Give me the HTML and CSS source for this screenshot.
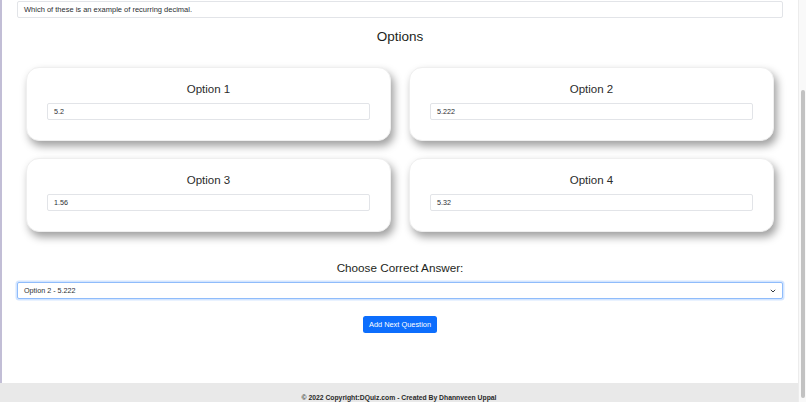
FILE: index.html
```html
<!DOCTYPE html>
<html lang="en">
<head>
<meta charset="utf-8">
<title>DQuiz - Add Question</title>
<link rel="stylesheet" href="styles.css">
</head>
<body>
<div class="page">
  <div class="main">
    <div class="content">
      <div class="field question">Which of these is an example of recurring decimal.</div>
      <h2 class="heading options-heading">Options</h2>
      <div class="cards">
        <div class="card">
          <h3 class="card-title">Option 1</h3>
          <div class="field">5.2</div>
        </div>
        <div class="card">
          <h3 class="card-title">Option 2</h3>
          <div class="field">5.222</div>
        </div>
        <div class="card">
          <h3 class="card-title">Option 3</h3>
          <div class="field">1.56</div>
        </div>
        <div class="card">
          <h3 class="card-title">Option 4</h3>
          <div class="field">5.32</div>
        </div>
      </div>
      <h2 class="heading answer-heading">Choose Correct Answer:</h2>
      <div class="field select">
        <span>Option 2 - 5.222</span>
        <svg class="chev" width="6" height="4" viewBox="0 0 6 4"><path d="M0.8 0.8 L3 3 L5.2 0.8" fill="none" stroke="#343a40" stroke-width="1"/></svg>
      </div>
      <div class="actions">
        <button class="btn">Add Next Question</button>
      </div>
    </div>
    <footer class="footer">© 2022 Copyright:DQuiz.com - Created By Dhannveen Uppal</footer>
  </div>
  <div class="scrollbar"><div class="thumb"></div></div>
</div>
</body>
</html>
```
FILE: styles.css
```css
* { box-sizing: border-box; }
html, body { margin: 0; padding: 0; }
body {
  font-family: "Liberation Sans", Arial, sans-serif;
  color: #212529;
  background: #fff;
}
.page {
  display: flex;
  width: 806px;
  height: 402px;
  overflow: hidden;
}
.main {
  flex: 1;
  display: flex;
  flex-direction: column;
  min-width: 0;
}
.content {
  flex: 1;
  border-left: 2px solid #c2bed6;
  padding: 1px 15px 0 15px;
  display: flex;
  flex-direction: column;
}
.field {
  height: 17px;
  border: 1px solid #e2e4e8;
  border-radius: 2px;
  background: #fff;
  font-size: 7.2px;
  line-height: 15px;
  padding: 0 6px;
  color: #2b2f33;
  white-space: nowrap;
}
.question {
  font-size: 7.5px;
}
.heading {
  margin: 0;
  text-align: center;
  font-weight: 500;
  color: #1d1f21;
}
.options-heading {
  margin-top: 11px;
  font-size: 13.5px;
  line-height: 16px;
}
.cards {
  margin: 22px 9px 0 9px;
  display: grid;
  grid-template-columns: 1fr 1fr;
  column-gap: 18px;
  row-gap: 17px;
}
.card {
  height: 74px;
  background: #fff;
  border: 1px solid #efefef;
  border-radius: 13px;
  box-shadow: 3px 5px 9px rgba(0, 0, 0, 0.38);
  padding: 14px 20px 0 20px;
}
.card-title {
  margin: 0 0 7px 0;
  text-align: center;
  font-weight: 400;
  font-size: 11.5px;
  line-height: 14px;
  color: #2b2b2b;
}
.answer-heading {
  margin-top: 29px;
  font-size: 11.7px;
  line-height: 14px;
  font-weight: 400;
}
.select {
  margin-top: 7px;
  display: flex;
  align-items: center;
  justify-content: space-between;
  border-color: #8fbcfb;
  box-shadow: 0 0 0 1.5px rgba(13, 110, 253, 0.18);
  padding-right: 6px;
}
.chev { display: block; }
.actions {
  margin-top: 17px;
  display: flex;
  justify-content: center;
}
.btn {
  height: 17px;
  width: 74px;
  padding: 0;
  border: none;
  border-radius: 2.5px;
  background: #0d6efd;
  color: #fff;
  font-family: "Liberation Sans", Arial, sans-serif;
  font-size: 7.4px;
  line-height: 17px;
  white-space: nowrap;
}
.footer {
  height: 19px;
  background: #e9e9e9;
  text-align: center;
  font-weight: 700;
  font-size: 6.8px;
  line-height: 9px;
  padding-top: 10px;
  color: #2a2a2a;
  white-space: nowrap;
}
.scrollbar {
  width: 8px;
  background: #f9f9f9;
  border-left: 1px solid #ececec;
  padding: 90px 1px 4px 2px;
}
.thumb {
  height: 308px;
  background: #c2c2c2;
  border-radius: 3px;
}
```
